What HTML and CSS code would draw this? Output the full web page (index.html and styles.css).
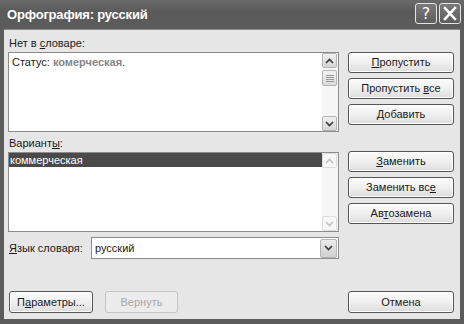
FILE: index.html
```html
<!DOCTYPE html>
<html lang="ru">
<head>
<meta charset="utf-8">
<title>Орфография: русский</title>
<link rel="stylesheet" href="styles.css">
</head>
<body>
<div class="window">
  <div class="titlebar">
    <span class="title">Орфография: русский</span>
    <div class="tb-buttons">
      <span class="tb-btn tb-help">?</span>
      <span class="tb-btn tb-close">
        <svg width="22" height="21" viewBox="0 0 22 21"><path d="M6 5 L16 16 M16 5 L6 16" stroke="#fff" stroke-width="2.6" stroke-linecap="square"/></svg>
      </span>
    </div>
  </div>
  <div class="client">
    <div class="main">
      <div class="left">
        <div class="label">Нет в <u>с</u>ловаре:</div>
        <div class="box">
          <div class="box-text">Статус: <span class="err">комерческая</span>.</div>
          <div class="vscroll">
            <span class="sb-btn"><svg width="9" height="6" viewBox="0 0 9 6"><path d="M1 5 L4.5 1.5 L8 5" fill="none" stroke="#3c3c3c" stroke-width="1.7"/></svg></span>
            <span class="sb-thumb"><svg width="8" height="7" viewBox="0 0 8 7"><path d="M0 0.5H8M0 2.5H8M0 4.5H8M0 6.5H8" stroke="#9a9a9a" stroke-width="1"/></svg></span>
            <span class="sb-track"></span>
            <span class="sb-btn"><svg width="9" height="6" viewBox="0 0 9 6"><path d="M1 1 L4.5 4.5 L8 1" fill="none" stroke="#3c3c3c" stroke-width="1.7"/></svg></span>
          </div>
        </div>
        <div class="label label2">Вариант<u>ы</u>:</div>
        <div class="box">
          <div class="list"><div class="item sel">коммерческая</div></div>
          <div class="vscroll disabled">
            <span class="sb-btn"><svg width="9" height="6" viewBox="0 0 9 6"><path d="M1 5 L4.5 1.5 L8 5" fill="none" stroke="#c4c4c4" stroke-width="1.7"/></svg></span>
            <span class="sb-track"></span>
            <span class="sb-btn"><svg width="9" height="6" viewBox="0 0 9 6"><path d="M1 1 L4.5 4.5 L8 1" fill="none" stroke="#c4c4c4" stroke-width="1.7"/></svg></span>
          </div>
        </div>
        <div class="lang-row">
          <span class="lang-label"><u>Я</u>зык словаря:</span>
          <div class="combo">
            <span class="combo-text">русский</span>
            <span class="combo-btn"><svg width="9" height="6" viewBox="0 0 9 6"><path d="M1 1 L4.5 4.5 L8 1" fill="none" stroke="#3c3c3c" stroke-width="1.7"/></svg></span>
          </div>
        </div>
      </div>
      <div class="right">
        <div class="btn-group">
          <button class="btn"><u>П</u>ропустить</button>
          <button class="btn">Пропустить <u>в</u>се</button>
          <button class="btn"><u>Д</u>обавить</button>
        </div>
        <div class="btn-group group2">
          <button class="btn"><u>З</u>аменить</button>
          <button class="btn">Заменить вс<u>е</u></button>
          <button class="btn">Ав<u>т</u>озамена</button>
        </div>
      </div>
    </div>
    <div class="bottom">
      <button class="btn btn-params">П<u>а</u>раметры...</button>
      <button class="btn btn-undo" disabled>Вернуть</button>
      <span class="spacer"></span>
      <button class="btn btn-cancel">Отмена</button>
    </div>
  </div>
</div>
</body>
</html>
```
FILE: styles.css
```css
* { box-sizing: border-box; }
html, body { margin: 0; padding: 0; }
body {
  width: 464px;
  height: 324px;
  overflow: hidden;
  font-family: "Liberation Sans", Arial, sans-serif;
  font-size: 11px;
  color: #1a1a1a;
}
u { text-decoration: underline; text-underline-offset: 1px; }

.window {
  width: 464px;
  height: 324px;
  background: #5c5c5c;
  display: flex;
  flex-direction: column;
}

.titlebar {
  height: 29px;
  flex: none;
  display: flex;
  align-items: center;
  padding: 0 3px 0 7px;
  background: linear-gradient(#6a6a6a, #5a5a5a 40%, #5c5c5c);
}
.title {
  color: #fff;
  font-weight: bold;
  font-size: 13px;
  letter-spacing: -0.2px;
  flex: 1;
  padding-bottom: 1px;
}
.tb-buttons {
  display: flex;
  gap: 2px;
  margin-top: -2px;
}
.tb-btn {
  width: 22px;
  height: 21px;
  border: 1px solid #e4e4e4;
  border-radius: 3px;
  background: linear-gradient(#7a7a7a, #5e5e5e);
  color: #fff;
  display: flex;
  align-items: center;
  justify-content: center;
}
.tb-help {
  font-family: "DejaVu Sans", sans-serif;
  font-size: 16px;
  line-height: 1;
}
.tb-close svg { display: block; margin: -1px; }

.client {
  flex: 1;
  margin: 0 4px 5px 4px;
  background: #e6e6e6;
  border-top: 1px solid #8a8a8a;
  display: flex;
  flex-direction: column;
  padding: 4px 6px 6px 4px;
}

.main {
  display: flex;
  gap: 9px;
}
.left {
  width: 331px;
  display: flex;
  flex-direction: column;
}
.label {
  height: 18px;
  line-height: 18px;
  padding-left: 1px;
}
.label2 {
  height: 20px;
  line-height: 20px;
  padding-top: 1px;
}
.box {
  height: 80px;
  border: 1px solid #8c8c8c;
  background: #fff;
  display: flex;
}
.box-text {
  flex: 1;
  padding: 2px 3px;
  line-height: 14px;
}
.err {
  color: #858585;
  font-weight: bold;
}
.list {
  flex: 1;
}
.item {
  height: 14px;
  line-height: 14px;
  padding-left: 1px;
}
.item.sel {
  background: #4a4a4a;
  color: #fff;
}

.vscroll {
  width: 16px;
  display: flex;
  flex-direction: column;
  background: #f6f6f6;
  padding: 0 1px 0 0;
}
.sb-btn {
  height: 15px;
  flex: none;
  border: 1px solid #b5b5b5;
  border-radius: 2px;
  background: linear-gradient(#f0f0f0, #d6d6d6);
  display: flex;
  align-items: center;
  justify-content: center;
}
.sb-thumb {
  height: 16px;
  flex: none;
  margin-top: 2px;
  border: 1px solid #b5b5b5;
  border-radius: 2px;
  background: linear-gradient(#f2f2f2, #dadada);
  display: flex;
  align-items: center;
  justify-content: center;
}
.sb-track { flex: 1; }
.vscroll.disabled .sb-btn {
  border-color: #dedede;
  background: #f6f6f6;
}

.lang-row {
  margin-top: 5px;
  height: 22px;
  display: flex;
  align-items: center;
}
.lang-label {
  width: 83px;
  padding-left: 1px;
  flex: none;
}
.combo {
  flex: 1;
  height: 22px;
  border: 1px solid #8c8c8c;
  background: #fff;
  display: flex;
  align-items: center;
  padding: 1px;
}
.combo-text {
  flex: 1;
  padding-left: 2px;
}
.combo-btn {
  width: 17px;
  height: 19px;
  border: 1px solid #b5b5b5;
  border-radius: 2px;
  background: linear-gradient(#ececec, #cfcfcf);
  display: flex;
  align-items: center;
  justify-content: center;
}

.right {
  width: 106px;
  padding-top: 18px;
  display: flex;
  flex-direction: column;
}
.btn-group {
  display: flex;
  flex-direction: column;
  gap: 5px;
}
.group2 { margin-top: 26px; }

.btn {
  display: block;
  font-family: "Liberation Sans", Arial, sans-serif;
  font-size: 11px;
  line-height: 19px;
  text-align: center;
  white-space: nowrap;
  color: #1a1a1a;
  height: 21px;
  width: 106px;
  padding: 0;
  border: 1px solid #555;
  border-radius: 3px;
  background: linear-gradient(#fbfbfb, #f0f0f0 50%, #dcdcdc);
  box-shadow: inset 0 0 0 1px #fff;
}

.bottom {
  margin-top: auto;
  display: flex;
  align-items: center;
  padding-left: 1px;
}
.bottom .btn { height: 22px; line-height: 20px; }
.btn-params { width: 84px; }
.btn-undo {
  width: 73px;
  margin-left: 12px;
  color: #a8a8a8;
  border-color: #c4c4c4;
  background: #ececec;
  box-shadow: none;
}
.spacer { flex: 1; }
.btn-cancel { width: 106px; }
```
